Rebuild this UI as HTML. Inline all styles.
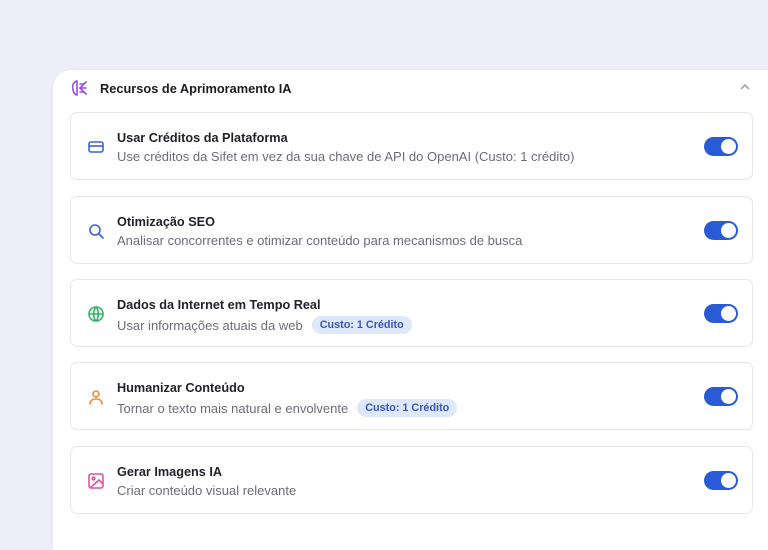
<!DOCTYPE html>
<html><head><meta charset="utf-8"><style>
*{box-sizing:border-box;margin:0;padding:0}
body{width:768px;height:529px;overflow:hidden;background:#eeeef8;font-family:"Liberation Sans",sans-serif;position:relative}
.panel{position:absolute;left:53px;top:70px;width:740px;height:480px;background:#fff;border-radius:18px 0 0 0;box-shadow:0 0 3px rgba(0,0,0,.04)}
.hdr{position:absolute;left:70px;top:79px;display:flex;align-items:center;gap:12px;font-size:12.8px;font-weight:bold;color:#1c1c24}
.chev{position:absolute;left:739px;top:82px}
.card{position:absolute;left:70px;width:683px;height:68px;border:1px solid #e6e6ec;border-radius:7px;background:#fff}
.card .ic{position:absolute;left:16px;top:25px;width:18px;height:18px}
.t{position:absolute;left:46px;top:18px;font-size:12.7px;font-weight:bold;color:#22222a}
.d{position:absolute;left:46px;top:36px;font-size:13px;color:#6c6c78;display:flex;align-items:center;gap:9px;white-space:nowrap}
.b{background:#dde8fb;color:#3b55b8;font-size:10.8px;font-weight:bold;padding:3px 8px;border-radius:9px}
.tg{position:absolute;left:633px;top:24px;width:34px;height:19px;border-radius:10px;background:#2a5bd7}
.tg:after{content:"";position:absolute;right:2px;top:2px;width:15px;height:15px;border-radius:50%;background:#fff}
</style></head><body>
<div class="panel"></div>
<div class="hdr"><svg width="18" height="18" viewBox="0 0 18 18" fill="none" stroke="#9b4de0" stroke-width="1.6" stroke-linecap="round"><path d="M7 2C3 3 2 7 3 11s3 5 4 5"/><path d="M7 2v14"/><path d="M16 3l-6 6 6 6M10 9h6M10 5h4M10 13h4"/></svg>Recursos de Aprimoramento IA</div>
<svg class="chev" width="12" height="10" viewBox="0 0 12 10" fill="none" stroke="#999" stroke-width="1.4"><path d="M2 7l4-4 4 4"/></svg>

<div class="card" style="top:112px"><svg class="ic" viewBox="0 0 18 18" fill="none" stroke="#3a62d8" stroke-width="1.6"><rect x="2" y="4" width="14" height="10" rx="2"/><path d="M2 8h14"/></svg><div class="t">Usar Créditos da Plataforma</div><div class="d">Use créditos da Sifet em vez da sua chave de API do OpenAI (Custo: 1 crédito)</div><div class="tg"></div></div>

<div class="card" style="top:196px"><svg class="ic" viewBox="0 0 18 18" fill="none" stroke="#3a62d8" stroke-width="1.6" stroke-linecap="round"><circle cx="8" cy="8" r="5"/><path d="M12 12l4 4"/></svg><div class="t">Otimização SEO</div><div class="d">Analisar concorrentes e otimizar conteúdo para mecanismos de busca</div><div class="tg"></div></div>

<div class="card" style="top:279px"><svg class="ic" viewBox="0 0 18 18" fill="none" stroke="#2fb565" stroke-width="1.6"><circle cx="9" cy="9" r="7"/><path d="M2 9h14M9 2c-3 3-3 11 0 14M9 2c3 3 3 11 0 14"/></svg><div class="t">Dados da Internet em Tempo Real</div><div class="d">Usar informações atuais da web <span class="b">Custo: 1 Crédito</span></div><div class="tg"></div></div>

<div class="card" style="top:362px"><svg class="ic" viewBox="0 0 18 18" fill="none" stroke="#ef8a3c" stroke-width="1.6" stroke-linecap="round"><circle cx="9" cy="6" r="3"/><path d="M3 16c0-4 3-5 6-5s6 1 6 5"/></svg><div class="t">Humanizar Conteúdo</div><div class="d">Tornar o texto mais natural e envolvente <span class="b">Custo: 1 Crédito</span></div><div class="tg"></div></div>

<div class="card" style="top:446px"><svg class="ic" viewBox="0 0 18 18" fill="none" stroke="#e0559a" stroke-width="1.6" stroke-linejoin="round"><rect x="2" y="2" width="14" height="14" rx="2"/><circle cx="6.5" cy="6.5" r="1.3"/><path d="M16 12l-4-4-9 8"/></svg><div class="t">Gerar Imagens IA</div><div class="d">Criar conteúdo visual relevante</div><div class="tg"></div></div>
</body></html>
